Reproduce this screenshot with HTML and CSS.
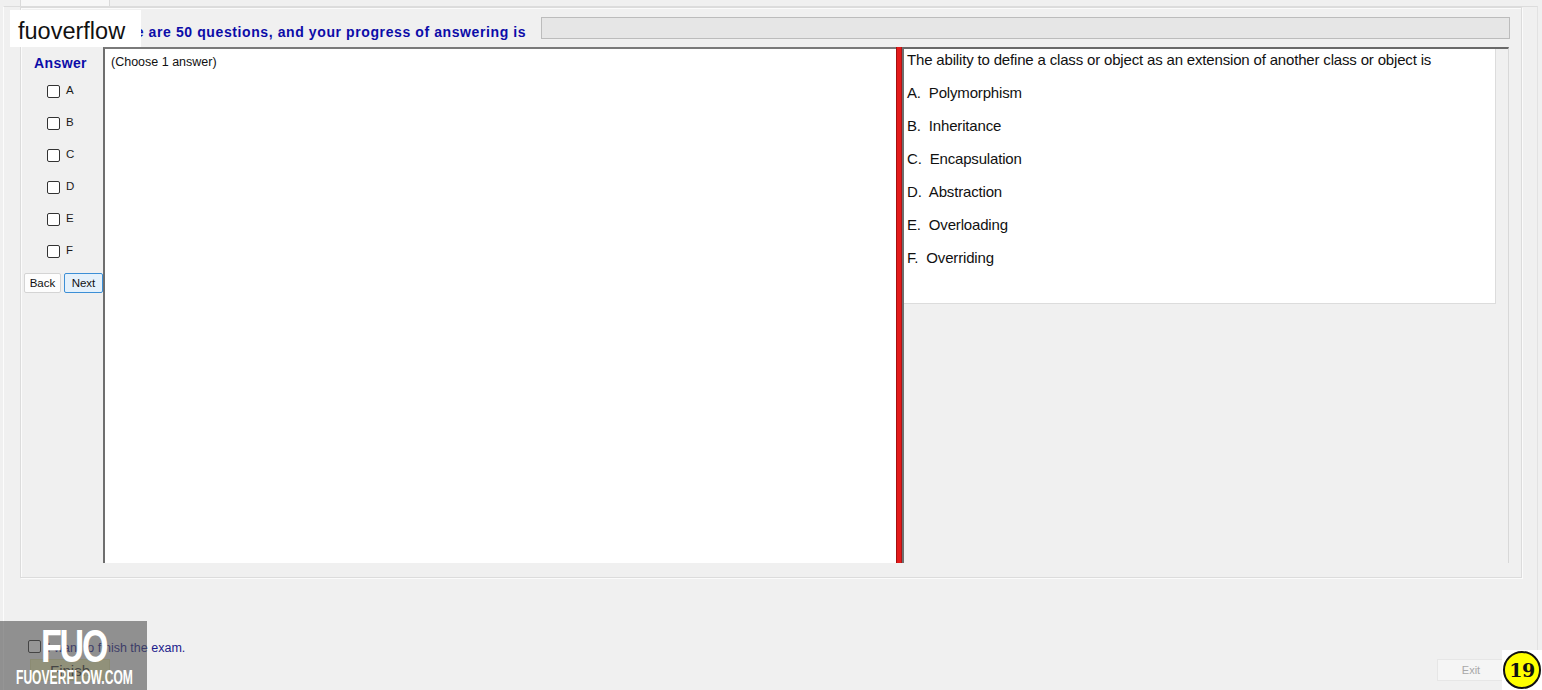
FILE: index.html
```html
<!DOCTYPE html>
<html>
<head>
<meta charset="utf-8">
<title>Exam</title>
<link rel="stylesheet" href="styles.css">
</head>
<body>
<div class="window">
  <div class="tabs"><div class="tab"></div></div>
  <div class="tabpage">
    <div class="group">
      <div class="inner">
        <div class="header">
          <div class="title">There are 50 questions, and your progress of answering is</div>
          <div class="progress"></div>
        </div>
        <div class="content">
          <div class="answers">
            <div class="answer-label">Answer</div>
            <div class="opts">
              <div class="opt"><span class="box"></span><span class="letter">A</span></div>
              <div class="opt"><span class="box"></span><span class="letter">B</span></div>
              <div class="opt"><span class="box"></span><span class="letter">C</span></div>
              <div class="opt"><span class="box"></span><span class="letter">D</span></div>
              <div class="opt"><span class="box"></span><span class="letter">E</span></div>
              <div class="opt"><span class="box"></span><span class="letter">F</span></div>
            </div>
            <div class="nav">
              <button class="btn back">Back</button>
              <button class="btn next">Next</button>
            </div>
          </div>
          <div class="textarea">(Choose 1 answer)</div>
          <div class="splitter"></div>
          <div class="right">
            <div class="question">
              <div class="qtext">The ability to define a class or object as an extension of another class or object is</div>
              <div class="choices">
                <div class="choice">A.  Polymorphism</div>
                <div class="choice">B.  Inheritance</div>
                <div class="choice">C.  Encapsulation</div>
                <div class="choice">D.  Abstraction</div>
                <div class="choice">E.  Overloading</div>
                <div class="choice">F.  Overriding</div>
              </div>
            </div>
          </div>
        </div>
      </div>
    </div>
    <div class="footer">
      <div class="finish-col">
        <div class="finish-check"><span class="box"></span><span class="finish-text">I want to finish the exam.</span></div>
        <button class="finish-btn">Finish</button>
      </div>
      <button class="exit-btn">Exit</button>
    </div>
  </div>

  <div class="wm-top">fuoverflow</div>
  <div class="wm-bottom">
    <div class="wm-fuo">FUO</div>
    <div class="wm-site">FUOVERFLOW.COM</div>
  </div>
  <div class="badge"><div class="badge-circle">19</div></div>
</div>
</body>
</html>
```
FILE: styles.css
```css
html, body {
  margin: 0;
  padding: 0;
}
body {
  background: #f0f0f0;
  font-family: "Liberation Sans", Arial, sans-serif;
  width: 1542px;
  height: 690px;
  overflow: hidden;
}
.window {
  position: relative;
  width: 1542px;
  height: 690px;
}
.tabs {
  height: 6px;
}
.tab {
  margin-left: 20px;
  width: 90px;
  height: 6px;
  box-sizing: border-box;
  background: #f7f7f7;
  border: 1px solid #dadada;
  border-top: none;
  border-bottom: none;
}
.tabpage {
  margin-left: 3px;
  width: 1535px;
  height: 684px;
  box-sizing: border-box;
  border-top: 1px solid #dcdcdc;
  border-left: 1px solid #fcfcfc;
  border-right: 1px solid #e2e2e2;
  padding-left: 16px;
}
.group {
  width: 1502px;
  height: 571px;
  box-sizing: border-box;
  border: 1px solid #dcdcdc;
  box-shadow: inset 1px 1px 0 #fbfbfb, 1px 1px 0 #fbfbfb;
  padding: 7px 0 0 2px;
}
.inner {
  width: 1486px;
  height: 548px;
  display: flex;
  flex-direction: column;
}
.header {
  height: 32px;
  display: flex;
  align-items: flex-start;
}
.title {
  flex: none;
  width: 518px;
  box-sizing: border-box;
  padding-left: 80px;
  padding-top: 9px;
  font-size: 14px;
  letter-spacing: 0.6px;
  line-height: 16px;
  font-weight: bold;
  color: #0c0ca8;
  white-space: nowrap;
  overflow: hidden;
}
.progress {
  flex: 1;
  margin-top: 2px;
  margin-right: -1px;
  height: 22px;
  box-sizing: border-box;
  background: #e6e6e6;
  border: 1px solid #bcbcbc;
}
.content {
  height: 516px;
  display: flex;
}
.answers {
  width: 80px;
  flex: none;
  display: flex;
  flex-direction: column;
}
.answer-label {
  margin-top: 8px;
  padding-left: 11px;
  font-size: 14px;
  letter-spacing: 0.4px;
  line-height: 16px;
  font-weight: bold;
  color: #0c0ca8;
}
.opts {
  margin-top: 4px;
  display: flex;
  flex-direction: column;
}
.opt {
  height: 32px;
  display: flex;
  align-items: center;
  padding-left: 24px;
}
.box {
  display: inline-block;
  width: 13px;
  height: 13px;
  box-sizing: border-box;
  border: 1px solid #333333;
  border-radius: 2px;
  background: #ffffff;
}
.letter {
  margin-left: 6px;
  font-size: 11.5px;
  color: #1a1a1a;
  margin-top: -3px;
}
.nav {
  margin-top: 6px;
  padding-left: 1px;
  display: flex;
  gap: 3px;
}
.btn {
  height: 20px;
  padding: 0;
  font-family: "Liberation Sans", Arial, sans-serif;
  font-size: 11.5px;
  color: #111;
  box-sizing: border-box;
  border-radius: 2px;
}
.back {
  width: 37px;
  background: #fdfdfd;
  border: 1px solid #d4d4d4;
}
.next {
  width: 39px;
  background: #e5f1fb;
  border: 1px solid #3c8fd6;
}
.textarea {
  width: 793px;
  flex: none;
  box-sizing: border-box;
  background: #ffffff;
  border-top: 2px solid #7a7a7a;
  border-left: 2px solid #6e6e6e;
  padding: 6px 0 0 6px;
  font-size: 12.5px;
  color: #111;
  line-height: 14px;
}
.splitter {
  width: 6px;
  flex: none;
  background: #e41a1a;
  border-left: 1px solid #a31010;
  border-right: 1px solid #b01414;
  box-sizing: border-box;
}
.right {
  width: 607px;
  flex: none;
  box-sizing: border-box;
  border-top: 2px solid #6a6a6a;
  border-left: 2px solid #6e6e6e;
  border-right: 1px solid #d8d8d8;
  margin-right: -1px;
}
.question {
  width: 592px;
  height: 255px;
  box-sizing: border-box;
  background: #ffffff;
  border-right: 1px solid #dcdcdc;
  border-bottom: 1px solid #dcdcdc;
  padding: 2px 0 0 3px;
  font-size: 15px;
  letter-spacing: -0.17px;
  color: #111;
}
.qtext {
  line-height: 18px;
  white-space: nowrap;
}
.choices {
  margin-top: 7px;
}
.choice {
  line-height: 33px;
  white-space: pre;
}
.footer {
  width: 1502px;
  height: 105px;
  display: flex;
  justify-content: space-between;
  align-items: flex-end;
}
.finish-col {
  padding-left: 8px;
  display: flex;
  flex-direction: column;
  margin-bottom: 2px;
}
.finish-check {
  display: flex;
  align-items: center;
  height: 16px;
}
.finish-text {
  margin-left: 6px;
  margin-top: 3px;
  font-size: 12.5px;
  color: #1c1c8c;
}
.finish-btn {
  margin-top: 5px;
  margin-left: 2px;
  width: 80px;
  height: 22px;
  padding: 0;
  font-family: "Liberation Sans", Arial, sans-serif;
  font-size: 15px;
  color: #333;
  background: #f2f2b8;
  border: 1px solid #e4e4a8;
}
.exit-btn {
  margin-right: 17px;
  margin-bottom: 2px;
  width: 68px;
  height: 22px;
  padding: 0;
  font-family: "Liberation Sans", Arial, sans-serif;
  font-size: 11px;
  color: #a8a8a8;
  background: #f5f5f5;
  border: 1px solid #e6e6e6;
}
.wm-top {
  position: absolute;
  left: 10px;
  top: 10px;
  width: 131px;
  height: 37px;
  background: #ffffff;
  box-sizing: border-box;
  padding-left: 8px;
  padding-top: 7px;
  font-size: 23.5px;
  line-height: 28px;
  color: #111;
}
.wm-bottom {
  position: absolute;
  left: 0;
  top: 621px;
  width: 147px;
  height: 69px;
  background: rgba(80, 80, 80, 0.6);
  color: #ffffff;
  font-weight: bold;
}
.wm-fuo {
  position: absolute;
  left: 41px;
  top: 2px;
  font-size: 46px;
  line-height: 46px;
  letter-spacing: -3px;
  transform: scaleX(0.74);
  transform-origin: left top;
}
.wm-site {
  position: absolute;
  left: 16px;
  top: 45px;
  font-size: 19.5px;
  line-height: 22px;
  transform: scaleX(0.62);
  transform-origin: left top;
  white-space: nowrap;
}
.badge {
  position: absolute;
  left: 1502px;
  top: 650px;
  width: 40px;
  height: 40px;
  background: #ffffff;
  display: flex;
  align-items: center;
  justify-content: center;
}
.badge-circle {
  width: 38px;
  height: 38px;
  box-sizing: border-box;
  border-radius: 50%;
  border: 2px solid #111;
  background: #ffff00;
  display: flex;
  align-items: center;
  justify-content: center;
  font-family: "DejaVu Serif", serif;
  font-weight: bold;
  font-size: 19px;
  letter-spacing: -0.5px;
  color: #111;
}
```
